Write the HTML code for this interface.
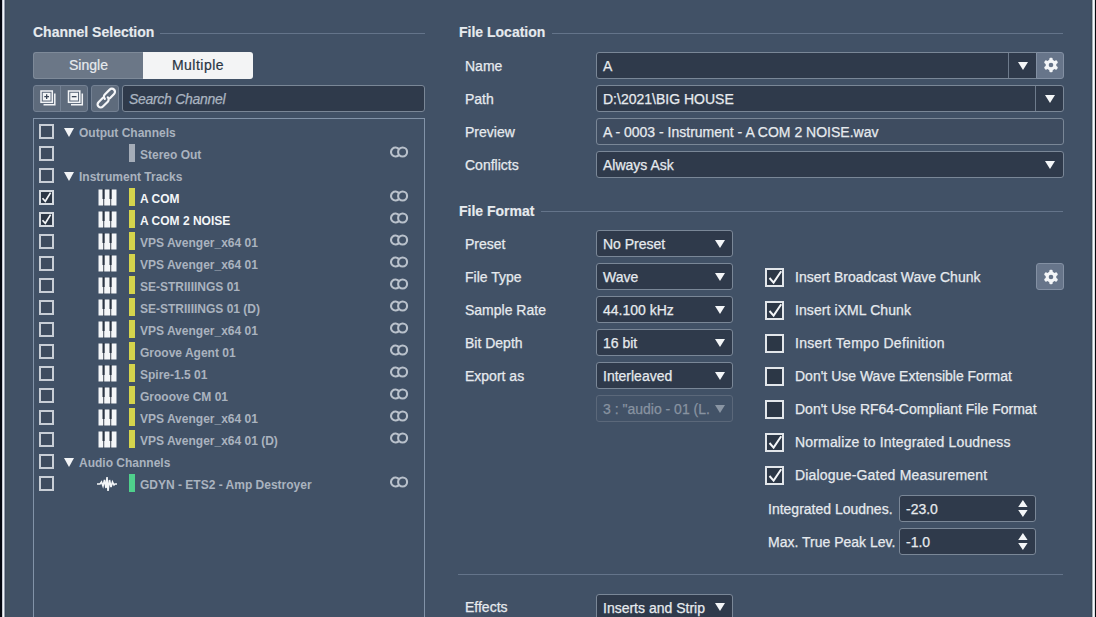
<!DOCTYPE html>
<html><head><meta charset="utf-8">
<style>
*{margin:0;padding:0;box-sizing:border-box}
html,body{width:1096px;height:617px;overflow:hidden;background:#415166;font-family:"Liberation Sans",sans-serif;color:#e6eaee}
.a{position:absolute}
#edgeL{left:0;top:0;width:2px;height:617px;background:#05080d}
#edgeL2{left:2px;top:0;width:1px;height:617px;background:#c9ced2}
#edgeL3{left:3px;top:0;width:1px;height:617px;background:#f3f7f9}
#edgeL4{left:4px;top:0;width:1px;height:617px;background:#96a0aa}
#edgeL5{left:5px;top:0;width:1px;height:617px;background:#3d4a5b}
#edgeL6{left:6px;top:0;width:4px;height:617px;background:#44535f}
#edgeR0{left:1091px;top:0;width:1px;height:617px;background:#3e4c58}
#edgeR{left:1092px;top:0;width:1px;height:617px;background:#a6b0b8}
#edgeR1{left:1093px;top:0;width:1px;height:617px;background:#f4f8fa}
#edgeR3{left:1094px;top:0;width:1px;height:617px;background:#d9dee2}
#edgeR2{left:1095px;top:0;width:1px;height:617px;background:#080b10}
.h{font-weight:bold;font-size:14px;line-height:17px;white-space:nowrap;-webkit-text-stroke:0.15px currentColor}
.sep{height:1px;background:#64748a}
.lbl{font-size:14px;line-height:16px;white-space:nowrap;-webkit-text-stroke:0.25px currentColor}
.inp{background:#2f3a4b;border:1px solid #7a8797;border-radius:3px;font-size:14px;line-height:26px;padding-left:6px;white-space:nowrap;overflow:hidden;-webkit-text-stroke:0.25px currentColor}
.tri{width:0;height:0;border-left:5px solid transparent;border-right:5px solid transparent;border-top:9px solid #f2f4f6}
.cb{width:15px;height:15px;border:2px solid #dfe3e8}
.tcb{width:15px;height:15px;border:2px solid #c9ced6}
.ti{font-size:12px;font-weight:bold;line-height:14px;color:#aab3bf;white-space:nowrap}
.bar{width:6px;height:18px;background:#d5d44c}
</style></head><body>
<div class="a" id="edgeL"></div><div class="a" id="edgeL2"></div><div class="a" id="edgeL3"></div><div class="a" id="edgeL4"></div><div class="a" id="edgeL5"></div><div class="a" id="edgeL6"></div>
<div class="a" id="edgeR0"></div><div class="a" id="edgeR"></div><div class="a" id="edgeR1"></div><div class="a" id="edgeR3"></div><div class="a" id="edgeR2"></div>

<!-- Left panel -->
<div class="a h" style="left:33px;top:24px">Channel Selection</div>
<div class="a sep" style="left:160px;top:33px;width:265px"></div>

<div class="a" style="left:33px;top:52px;width:110px;height:27px;background:#6b7787;border:1px solid #7e8a99;border-right:none;border-radius:3px 0 0 3px;font-size:14px;line-height:25px;text-align:center;color:#e6eaee;-webkit-text-stroke:0.2px currentColor">Single</div>
<div class="a" style="left:143px;top:52px;width:110px;height:27px;background:#f3f4f5;border-radius:0 3px 3px 0;font-size:14px;line-height:27px;text-align:center;color:#2a3443;letter-spacing:0.5px;-webkit-text-stroke:0.2px currentColor">Multiple</div>

<div class="a" style="left:33px;top:85px;width:55px;height:27px;background:#5e6b7c;border:1px solid #748193;border-radius:3px"></div>
<div class="a" style="left:60px;top:86px;width:1px;height:25px;background:#748193"></div>
<div class="a" style="left:91px;top:85px;width:28px;height:27px;background:#5e6b7c;border:1px solid #748193;border-radius:3px"></div>
<svg class="a" style="left:33px;top:85px" width="90" height="27" viewBox="33 85 90 27">
<g fill="none" stroke="#f2f4f6" stroke-width="1.5">
<path d="M43.5 104.8 H54.8 V93.5"/>
<rect x="41" y="91" width="11.3" height="11.3"/>
<path d="M71 104.8 H82.3 V93.5"/>
<rect x="68.5" y="91" width="11.3" height="11.3"/>
</g>
<rect x="42.8" y="92.8" width="7.7" height="7.7" fill="#f2f4f6"/>
<rect x="70.3" y="92.8" width="7.7" height="7.7" fill="#f2f4f6"/>
<path d="M46.65 94.3 V99 M44.3 96.65 H49" stroke="#3a4556" stroke-width="1.3"/>
<path d="M71.8 96.65 H76.5" stroke="#3a4556" stroke-width="1.3"/>
<g transform="rotate(-45 106 97.8)" fill="none" stroke="#f6f7f9" stroke-width="2.2" stroke-linecap="round">
<path d="M103.5 95.6 H97.6 A3.1 3.1 0 0 0 97.6 101.8 H104.5 A3.1 3.1 0 0 0 107.6 98.7"/>
<path d="M108.5 100.8 H114.4 A3.1 3.1 0 0 0 114.4 94.6 H107.5 A3.1 3.1 0 0 0 104.4 97.7"/>
</g>
</svg>
<div class="a inp" style="left:122px;top:85px;width:303px;height:27px;font-style:italic;color:#aab4c0;letter-spacing:-0.3px">Search Channel</div>

<div class="a" style="left:33px;top:118px;width:392px;height:510px;border:1px solid #8293a8"></div>

<div id="tree">
<svg class="a" style="left:39px;top:124px" width="15" height="15" viewBox="0 0 15 15"><rect x="1" y="1" width="13" height="13" fill="#3e4c5f" stroke="#c8ced6" stroke-width="2"/></svg>
<div class="a tri" style="left:64px;top:128px"></div>
<div class="a ti" style="left:79px;top:126px">Output Channels</div>
<svg class="a" style="left:39px;top:146px" width="15" height="15" viewBox="0 0 15 15"><rect x="1" y="1" width="13" height="13" fill="#3e4c5f" stroke="#c8ced6" stroke-width="2"/></svg>
<div class="a bar" style="left:129px;top:144px;background:#a5adb8"></div>
<div class="a ti" style="left:140px;top:148px;color:#aab3bf">Stereo Out</div>
<svg class="a" style="left:389px;top:146px" width="21" height="13" viewBox="0 0 21 13"><path d="M10.05 3.23 A4.5 4.5 0 1 0 10.05 8.77" fill="none" stroke="#b9c1cb" stroke-width="2.1"/><circle cx="13.6" cy="6" r="4.5" fill="none" stroke="#b9c1cb" stroke-width="2.1"/></svg>
<svg class="a" style="left:39px;top:168px" width="15" height="15" viewBox="0 0 15 15"><rect x="1" y="1" width="13" height="13" fill="#3e4c5f" stroke="#c8ced6" stroke-width="2"/></svg>
<div class="a tri" style="left:64px;top:172px"></div>
<div class="a ti" style="left:79px;top:170px">Instrument Tracks</div>
<svg class="a" style="left:39px;top:190px" width="15" height="15" viewBox="0 0 15 15"><rect x="1" y="1" width="13" height="13" fill="#2c3746" stroke="#d5dae0" stroke-width="2"/><path d="M3.5 8.2 L6.3 11.3 L11.6 2.6" fill="none" stroke="#f4f6f8" stroke-width="1.7"/></svg>
<svg class="a" style="left:98px;top:189px" width="19" height="17" viewBox="0 0 19 17"><rect x="0.5" y="0.5" width="18" height="16" fill="#f4f6f8"/><rect x="4.5" y="0" width="2.2" height="10" fill="#2a3442"/><rect x="11.5" y="0" width="2.2" height="10" fill="#2a3442"/><rect x="5.3" y="10" width="0.9" height="7" fill="#2a3442"/><rect x="12.3" y="10" width="0.9" height="7" fill="#2a3442"/></svg>
<div class="a bar" style="left:129px;top:188px"></div>
<div class="a ti" style="left:140px;top:192px;color:#f4f6f8">A COM</div>
<svg class="a" style="left:389px;top:190px" width="21" height="13" viewBox="0 0 21 13"><path d="M10.05 3.23 A4.5 4.5 0 1 0 10.05 8.77" fill="none" stroke="#b9c1cb" stroke-width="2.1"/><circle cx="13.6" cy="6" r="4.5" fill="none" stroke="#b9c1cb" stroke-width="2.1"/></svg>
<svg class="a" style="left:39px;top:212px" width="15" height="15" viewBox="0 0 15 15"><rect x="1" y="1" width="13" height="13" fill="#2c3746" stroke="#d5dae0" stroke-width="2"/><path d="M3.5 8.2 L6.3 11.3 L11.6 2.6" fill="none" stroke="#f4f6f8" stroke-width="1.7"/></svg>
<svg class="a" style="left:98px;top:211px" width="19" height="17" viewBox="0 0 19 17"><rect x="0.5" y="0.5" width="18" height="16" fill="#f4f6f8"/><rect x="4.5" y="0" width="2.2" height="10" fill="#2a3442"/><rect x="11.5" y="0" width="2.2" height="10" fill="#2a3442"/><rect x="5.3" y="10" width="0.9" height="7" fill="#2a3442"/><rect x="12.3" y="10" width="0.9" height="7" fill="#2a3442"/></svg>
<div class="a bar" style="left:129px;top:210px"></div>
<div class="a ti" style="left:140px;top:214px;color:#f4f6f8">A COM 2 NOISE</div>
<svg class="a" style="left:389px;top:212px" width="21" height="13" viewBox="0 0 21 13"><path d="M10.05 3.23 A4.5 4.5 0 1 0 10.05 8.77" fill="none" stroke="#b9c1cb" stroke-width="2.1"/><circle cx="13.6" cy="6" r="4.5" fill="none" stroke="#b9c1cb" stroke-width="2.1"/></svg>
<svg class="a" style="left:39px;top:234px" width="15" height="15" viewBox="0 0 15 15"><rect x="1" y="1" width="13" height="13" fill="#3e4c5f" stroke="#c8ced6" stroke-width="2"/></svg>
<svg class="a" style="left:98px;top:233px" width="19" height="17" viewBox="0 0 19 17"><rect x="0.5" y="0.5" width="18" height="16" fill="#f4f6f8"/><rect x="4.5" y="0" width="2.2" height="10" fill="#2a3442"/><rect x="11.5" y="0" width="2.2" height="10" fill="#2a3442"/><rect x="5.3" y="10" width="0.9" height="7" fill="#2a3442"/><rect x="12.3" y="10" width="0.9" height="7" fill="#2a3442"/></svg>
<div class="a bar" style="left:129px;top:232px"></div>
<div class="a ti" style="left:140px;top:236px;color:#aab3bf">VPS Avenger_x64 01</div>
<svg class="a" style="left:389px;top:234px" width="21" height="13" viewBox="0 0 21 13"><path d="M10.05 3.23 A4.5 4.5 0 1 0 10.05 8.77" fill="none" stroke="#b9c1cb" stroke-width="2.1"/><circle cx="13.6" cy="6" r="4.5" fill="none" stroke="#b9c1cb" stroke-width="2.1"/></svg>
<svg class="a" style="left:39px;top:256px" width="15" height="15" viewBox="0 0 15 15"><rect x="1" y="1" width="13" height="13" fill="#3e4c5f" stroke="#c8ced6" stroke-width="2"/></svg>
<svg class="a" style="left:98px;top:255px" width="19" height="17" viewBox="0 0 19 17"><rect x="0.5" y="0.5" width="18" height="16" fill="#f4f6f8"/><rect x="4.5" y="0" width="2.2" height="10" fill="#2a3442"/><rect x="11.5" y="0" width="2.2" height="10" fill="#2a3442"/><rect x="5.3" y="10" width="0.9" height="7" fill="#2a3442"/><rect x="12.3" y="10" width="0.9" height="7" fill="#2a3442"/></svg>
<div class="a bar" style="left:129px;top:254px"></div>
<div class="a ti" style="left:140px;top:258px;color:#aab3bf">VPS Avenger_x64 01</div>
<svg class="a" style="left:389px;top:256px" width="21" height="13" viewBox="0 0 21 13"><path d="M10.05 3.23 A4.5 4.5 0 1 0 10.05 8.77" fill="none" stroke="#b9c1cb" stroke-width="2.1"/><circle cx="13.6" cy="6" r="4.5" fill="none" stroke="#b9c1cb" stroke-width="2.1"/></svg>
<svg class="a" style="left:39px;top:278px" width="15" height="15" viewBox="0 0 15 15"><rect x="1" y="1" width="13" height="13" fill="#3e4c5f" stroke="#c8ced6" stroke-width="2"/></svg>
<svg class="a" style="left:98px;top:277px" width="19" height="17" viewBox="0 0 19 17"><rect x="0.5" y="0.5" width="18" height="16" fill="#f4f6f8"/><rect x="4.5" y="0" width="2.2" height="10" fill="#2a3442"/><rect x="11.5" y="0" width="2.2" height="10" fill="#2a3442"/><rect x="5.3" y="10" width="0.9" height="7" fill="#2a3442"/><rect x="12.3" y="10" width="0.9" height="7" fill="#2a3442"/></svg>
<div class="a bar" style="left:129px;top:276px"></div>
<div class="a ti" style="left:140px;top:280px;color:#aab3bf">SE-STRIIIINGS 01</div>
<svg class="a" style="left:389px;top:278px" width="21" height="13" viewBox="0 0 21 13"><path d="M10.05 3.23 A4.5 4.5 0 1 0 10.05 8.77" fill="none" stroke="#b9c1cb" stroke-width="2.1"/><circle cx="13.6" cy="6" r="4.5" fill="none" stroke="#b9c1cb" stroke-width="2.1"/></svg>
<svg class="a" style="left:39px;top:300px" width="15" height="15" viewBox="0 0 15 15"><rect x="1" y="1" width="13" height="13" fill="#3e4c5f" stroke="#c8ced6" stroke-width="2"/></svg>
<svg class="a" style="left:98px;top:299px" width="19" height="17" viewBox="0 0 19 17"><rect x="0.5" y="0.5" width="18" height="16" fill="#f4f6f8"/><rect x="4.5" y="0" width="2.2" height="10" fill="#2a3442"/><rect x="11.5" y="0" width="2.2" height="10" fill="#2a3442"/><rect x="5.3" y="10" width="0.9" height="7" fill="#2a3442"/><rect x="12.3" y="10" width="0.9" height="7" fill="#2a3442"/></svg>
<div class="a bar" style="left:129px;top:298px"></div>
<div class="a ti" style="left:140px;top:302px;color:#aab3bf">SE-STRIIIINGS 01 (D)</div>
<svg class="a" style="left:389px;top:300px" width="21" height="13" viewBox="0 0 21 13"><path d="M10.05 3.23 A4.5 4.5 0 1 0 10.05 8.77" fill="none" stroke="#b9c1cb" stroke-width="2.1"/><circle cx="13.6" cy="6" r="4.5" fill="none" stroke="#b9c1cb" stroke-width="2.1"/></svg>
<svg class="a" style="left:39px;top:322px" width="15" height="15" viewBox="0 0 15 15"><rect x="1" y="1" width="13" height="13" fill="#3e4c5f" stroke="#c8ced6" stroke-width="2"/></svg>
<svg class="a" style="left:98px;top:321px" width="19" height="17" viewBox="0 0 19 17"><rect x="0.5" y="0.5" width="18" height="16" fill="#f4f6f8"/><rect x="4.5" y="0" width="2.2" height="10" fill="#2a3442"/><rect x="11.5" y="0" width="2.2" height="10" fill="#2a3442"/><rect x="5.3" y="10" width="0.9" height="7" fill="#2a3442"/><rect x="12.3" y="10" width="0.9" height="7" fill="#2a3442"/></svg>
<div class="a bar" style="left:129px;top:320px"></div>
<div class="a ti" style="left:140px;top:324px;color:#aab3bf">VPS Avenger_x64 01</div>
<svg class="a" style="left:389px;top:322px" width="21" height="13" viewBox="0 0 21 13"><path d="M10.05 3.23 A4.5 4.5 0 1 0 10.05 8.77" fill="none" stroke="#b9c1cb" stroke-width="2.1"/><circle cx="13.6" cy="6" r="4.5" fill="none" stroke="#b9c1cb" stroke-width="2.1"/></svg>
<svg class="a" style="left:39px;top:344px" width="15" height="15" viewBox="0 0 15 15"><rect x="1" y="1" width="13" height="13" fill="#3e4c5f" stroke="#c8ced6" stroke-width="2"/></svg>
<svg class="a" style="left:98px;top:343px" width="19" height="17" viewBox="0 0 19 17"><rect x="0.5" y="0.5" width="18" height="16" fill="#f4f6f8"/><rect x="4.5" y="0" width="2.2" height="10" fill="#2a3442"/><rect x="11.5" y="0" width="2.2" height="10" fill="#2a3442"/><rect x="5.3" y="10" width="0.9" height="7" fill="#2a3442"/><rect x="12.3" y="10" width="0.9" height="7" fill="#2a3442"/></svg>
<div class="a bar" style="left:129px;top:342px"></div>
<div class="a ti" style="left:140px;top:346px;color:#aab3bf">Groove Agent 01</div>
<svg class="a" style="left:389px;top:344px" width="21" height="13" viewBox="0 0 21 13"><path d="M10.05 3.23 A4.5 4.5 0 1 0 10.05 8.77" fill="none" stroke="#b9c1cb" stroke-width="2.1"/><circle cx="13.6" cy="6" r="4.5" fill="none" stroke="#b9c1cb" stroke-width="2.1"/></svg>
<svg class="a" style="left:39px;top:366px" width="15" height="15" viewBox="0 0 15 15"><rect x="1" y="1" width="13" height="13" fill="#3e4c5f" stroke="#c8ced6" stroke-width="2"/></svg>
<svg class="a" style="left:98px;top:365px" width="19" height="17" viewBox="0 0 19 17"><rect x="0.5" y="0.5" width="18" height="16" fill="#f4f6f8"/><rect x="4.5" y="0" width="2.2" height="10" fill="#2a3442"/><rect x="11.5" y="0" width="2.2" height="10" fill="#2a3442"/><rect x="5.3" y="10" width="0.9" height="7" fill="#2a3442"/><rect x="12.3" y="10" width="0.9" height="7" fill="#2a3442"/></svg>
<div class="a bar" style="left:129px;top:364px"></div>
<div class="a ti" style="left:140px;top:368px;color:#aab3bf">Spire-1.5 01</div>
<svg class="a" style="left:389px;top:366px" width="21" height="13" viewBox="0 0 21 13"><path d="M10.05 3.23 A4.5 4.5 0 1 0 10.05 8.77" fill="none" stroke="#b9c1cb" stroke-width="2.1"/><circle cx="13.6" cy="6" r="4.5" fill="none" stroke="#b9c1cb" stroke-width="2.1"/></svg>
<svg class="a" style="left:39px;top:388px" width="15" height="15" viewBox="0 0 15 15"><rect x="1" y="1" width="13" height="13" fill="#3e4c5f" stroke="#c8ced6" stroke-width="2"/></svg>
<svg class="a" style="left:98px;top:387px" width="19" height="17" viewBox="0 0 19 17"><rect x="0.5" y="0.5" width="18" height="16" fill="#f4f6f8"/><rect x="4.5" y="0" width="2.2" height="10" fill="#2a3442"/><rect x="11.5" y="0" width="2.2" height="10" fill="#2a3442"/><rect x="5.3" y="10" width="0.9" height="7" fill="#2a3442"/><rect x="12.3" y="10" width="0.9" height="7" fill="#2a3442"/></svg>
<div class="a bar" style="left:129px;top:386px"></div>
<div class="a ti" style="left:140px;top:390px;color:#aab3bf">Grooove CM 01</div>
<svg class="a" style="left:389px;top:388px" width="21" height="13" viewBox="0 0 21 13"><path d="M10.05 3.23 A4.5 4.5 0 1 0 10.05 8.77" fill="none" stroke="#b9c1cb" stroke-width="2.1"/><circle cx="13.6" cy="6" r="4.5" fill="none" stroke="#b9c1cb" stroke-width="2.1"/></svg>
<svg class="a" style="left:39px;top:410px" width="15" height="15" viewBox="0 0 15 15"><rect x="1" y="1" width="13" height="13" fill="#3e4c5f" stroke="#c8ced6" stroke-width="2"/></svg>
<svg class="a" style="left:98px;top:409px" width="19" height="17" viewBox="0 0 19 17"><rect x="0.5" y="0.5" width="18" height="16" fill="#f4f6f8"/><rect x="4.5" y="0" width="2.2" height="10" fill="#2a3442"/><rect x="11.5" y="0" width="2.2" height="10" fill="#2a3442"/><rect x="5.3" y="10" width="0.9" height="7" fill="#2a3442"/><rect x="12.3" y="10" width="0.9" height="7" fill="#2a3442"/></svg>
<div class="a bar" style="left:129px;top:408px"></div>
<div class="a ti" style="left:140px;top:412px;color:#aab3bf">VPS Avenger_x64 01</div>
<svg class="a" style="left:389px;top:410px" width="21" height="13" viewBox="0 0 21 13"><path d="M10.05 3.23 A4.5 4.5 0 1 0 10.05 8.77" fill="none" stroke="#b9c1cb" stroke-width="2.1"/><circle cx="13.6" cy="6" r="4.5" fill="none" stroke="#b9c1cb" stroke-width="2.1"/></svg>
<svg class="a" style="left:39px;top:432px" width="15" height="15" viewBox="0 0 15 15"><rect x="1" y="1" width="13" height="13" fill="#3e4c5f" stroke="#c8ced6" stroke-width="2"/></svg>
<svg class="a" style="left:98px;top:431px" width="19" height="17" viewBox="0 0 19 17"><rect x="0.5" y="0.5" width="18" height="16" fill="#f4f6f8"/><rect x="4.5" y="0" width="2.2" height="10" fill="#2a3442"/><rect x="11.5" y="0" width="2.2" height="10" fill="#2a3442"/><rect x="5.3" y="10" width="0.9" height="7" fill="#2a3442"/><rect x="12.3" y="10" width="0.9" height="7" fill="#2a3442"/></svg>
<div class="a bar" style="left:129px;top:430px"></div>
<div class="a ti" style="left:140px;top:434px;color:#aab3bf">VPS Avenger_x64 01 (D)</div>
<svg class="a" style="left:389px;top:432px" width="21" height="13" viewBox="0 0 21 13"><path d="M10.05 3.23 A4.5 4.5 0 1 0 10.05 8.77" fill="none" stroke="#b9c1cb" stroke-width="2.1"/><circle cx="13.6" cy="6" r="4.5" fill="none" stroke="#b9c1cb" stroke-width="2.1"/></svg>
<svg class="a" style="left:39px;top:454px" width="15" height="15" viewBox="0 0 15 15"><rect x="1" y="1" width="13" height="13" fill="#3e4c5f" stroke="#c8ced6" stroke-width="2"/></svg>
<div class="a tri" style="left:64px;top:458px"></div>
<div class="a ti" style="left:79px;top:456px">Audio Channels</div>
<svg class="a" style="left:39px;top:476px" width="15" height="15" viewBox="0 0 15 15"><rect x="1" y="1" width="13" height="13" fill="#3e4c5f" stroke="#c8ced6" stroke-width="2"/></svg>
<svg class="a" style="left:96px;top:476px" width="22" height="16" viewBox="0 0 22 16"><path d="M1 8 L4 8 L5.5 6 L7 10 L8.5 4 L10 12 L11 1 L12 15 L13.5 4 L15 11 L16.5 6 L18 9 L19 8 L21 8" fill="none" stroke="#f4f6f8" stroke-width="1.6" stroke-linejoin="miter"/></svg>
<div class="a bar" style="left:129px;top:474px;background:#4fd08c"></div>
<div class="a ti" style="left:140px;top:478px;color:#aab3bf">GDYN - ETS2 - Amp Destroyer</div>
<svg class="a" style="left:389px;top:476px" width="21" height="13" viewBox="0 0 21 13"><path d="M10.05 3.23 A4.5 4.5 0 1 0 10.05 8.77" fill="none" stroke="#b9c1cb" stroke-width="2.1"/><circle cx="13.6" cy="6" r="4.5" fill="none" stroke="#b9c1cb" stroke-width="2.1"/></svg>
</div><!--/tree-->

<!-- Right panel -->
<div class="a h" style="left:459px;top:24px">File Location</div>
<div class="a sep" style="left:552px;top:33px;width:511px"></div>

<div class="a lbl" style="left:465px;top:58px">Name</div>
<div class="a lbl" style="left:465px;top:91px">Path</div>
<div class="a lbl" style="left:465px;top:124px">Preview</div>
<div class="a lbl" style="left:465px;top:157px">Conflicts</div>

<div class="a inp" style="left:596px;top:52px;width:441px;height:27px;border-radius:3px 0 0 3px">A</div>
<div class="a" style="left:1008px;top:53px;width:1px;height:25px;background:#6e7b8c"></div>
<div class="a" style="left:1036px;top:52px;width:28px;height:27px;background:#67758a;border:1px solid #8390a3;border-radius:0 3px 3px 0"></div>

<div class="a inp" style="left:596px;top:85px;width:468px;height:27px">D:\2021\BIG HOUSE</div>
<div class="a" style="left:1035px;top:86px;width:1px;height:25px;background:#6e7b8c"></div>
<div class="a inp" style="left:596px;top:118px;width:468px;height:27px;background:#3e4c60">A - 0003 - Instrument - A COM 2 NOISE.wav</div>
<div class="a inp" style="left:596px;top:151px;width:468px;height:27px">Always Ask</div>

<div class="a h" style="left:459px;top:203px">File Format</div>
<div class="a sep" style="left:541px;top:211px;width:522px"></div>

<div class="a lbl" style="left:465px;top:236px">Preset</div>
<div class="a lbl" style="left:465px;top:269px">File Type</div>
<div class="a lbl" style="left:465px;top:302px">Sample Rate</div>
<div class="a lbl" style="left:465px;top:335px">Bit Depth</div>
<div class="a lbl" style="left:465px;top:368px">Export as</div>

<div class="a inp" style="left:596px;top:230px;width:137px;height:27px">No Preset</div>
<div class="a inp" style="left:596px;top:263px;width:137px;height:27px">Wave</div>
<div class="a inp" style="left:596px;top:296px;width:137px;height:27px">44.100 kHz</div>
<div class="a inp" style="left:596px;top:329px;width:137px;height:27px">16 bit</div>
<div class="a inp" style="left:596px;top:362px;width:137px;height:27px">Interleaved</div>
<div class="a inp" style="left:596px;top:395px;width:137px;height:27px;background:#425267;color:#8893a1;border-color:#5b687a">3 : "audio - 01 (L.</div>

<div id="right">
<svg class="a" style="left:765px;top:268px" width="19" height="19" viewBox="0 0 19 19"><rect x="1" y="1" width="17" height="17" fill="#2c3746" stroke="#e2e6ea" stroke-width="2"/><path d="M4.5 10 L8.6 14.6 L16.2 3.2" fill="none" stroke="#f4f6f8" stroke-width="2"/></svg>
<div class="a lbl" style="left:795px;top:269px;letter-spacing:0px">Insert Broadcast Wave Chunk</div>
<svg class="a" style="left:765px;top:301px" width="19" height="19" viewBox="0 0 19 19"><rect x="1" y="1" width="17" height="17" fill="#2c3746" stroke="#e2e6ea" stroke-width="2"/><path d="M4.5 10 L8.6 14.6 L16.2 3.2" fill="none" stroke="#f4f6f8" stroke-width="2"/></svg>
<div class="a lbl" style="left:795px;top:302px;letter-spacing:0.08px">Insert iXML Chunk</div>
<svg class="a" style="left:765px;top:334px" width="19" height="19" viewBox="0 0 19 19"><rect x="1" y="1" width="17" height="17" fill="#2c3746" stroke="#e2e6ea" stroke-width="2"/></svg>
<div class="a lbl" style="left:795px;top:335px;letter-spacing:0.3px">Insert Tempo Definition</div>
<svg class="a" style="left:765px;top:367px" width="19" height="19" viewBox="0 0 19 19"><rect x="1" y="1" width="17" height="17" fill="#2c3746" stroke="#e2e6ea" stroke-width="2"/></svg>
<div class="a lbl" style="left:795px;top:368px;letter-spacing:0px">Don&#39;t Use Wave Extensible Format</div>
<svg class="a" style="left:765px;top:400px" width="19" height="19" viewBox="0 0 19 19"><rect x="1" y="1" width="17" height="17" fill="#2c3746" stroke="#e2e6ea" stroke-width="2"/></svg>
<div class="a lbl" style="left:795px;top:401px;letter-spacing:0px">Don&#39;t Use RF64-Compliant File Format</div>
<svg class="a" style="left:765px;top:433px" width="19" height="19" viewBox="0 0 19 19"><rect x="1" y="1" width="17" height="17" fill="#2c3746" stroke="#e2e6ea" stroke-width="2"/><path d="M4.5 10 L8.6 14.6 L16.2 3.2" fill="none" stroke="#f4f6f8" stroke-width="2"/></svg>
<div class="a lbl" style="left:795px;top:434px;letter-spacing:0.17px">Normalize to Integrated Loudness</div>
<svg class="a" style="left:765px;top:466px" width="19" height="19" viewBox="0 0 19 19"><rect x="1" y="1" width="17" height="17" fill="#2c3746" stroke="#e2e6ea" stroke-width="2"/><path d="M4.5 10 L8.6 14.6 L16.2 3.2" fill="none" stroke="#f4f6f8" stroke-width="2"/></svg>
<div class="a lbl" style="left:795px;top:467px;letter-spacing:0.18px">Dialogue-Gated Measurement</div>
<svg class="a" style="left:714.5px;top:240px" width="10" height="8" viewBox="0 0 10 8"><path d="M0 0 L10 0 L5.0 8 Z" fill="#f4f6f8"/></svg>
<svg class="a" style="left:714.5px;top:273px" width="10" height="8" viewBox="0 0 10 8"><path d="M0 0 L10 0 L5.0 8 Z" fill="#f4f6f8"/></svg>
<svg class="a" style="left:714.5px;top:306px" width="10" height="8" viewBox="0 0 10 8"><path d="M0 0 L10 0 L5.0 8 Z" fill="#f4f6f8"/></svg>
<svg class="a" style="left:714.5px;top:339px" width="10" height="8" viewBox="0 0 10 8"><path d="M0 0 L10 0 L5.0 8 Z" fill="#f4f6f8"/></svg>
<svg class="a" style="left:714.5px;top:372px" width="10" height="8" viewBox="0 0 10 8"><path d="M0 0 L10 0 L5.0 8 Z" fill="#f4f6f8"/></svg>
<svg class="a" style="left:714.5px;top:405px" width="10" height="8" viewBox="0 0 10 8"><path d="M0 0 L10 0 L5.0 8 Z" fill="#8a95a3"/></svg>
<svg class="a" style="left:714.5px;top:603px" width="10" height="8" viewBox="0 0 10 8"><path d="M0 0 L10 0 L5.0 8 Z" fill="#f4f6f8"/></svg>
<svg class="a" style="left:1018px;top:62px" width="10" height="8" viewBox="0 0 10 8"><path d="M0 0 L10 0 L5.0 8 Z" fill="#f4f6f8"/></svg>
<svg class="a" style="left:1045px;top:95px" width="10" height="8" viewBox="0 0 10 8"><path d="M0 0 L10 0 L5.0 8 Z" fill="#f4f6f8"/></svg>
<svg class="a" style="left:1045px;top:161px" width="10" height="8" viewBox="0 0 10 8"><path d="M0 0 L10 0 L5.0 8 Z" fill="#f4f6f8"/></svg>
<svg class="a" style="left:1043px;top:57px" width="16" height="16" viewBox="-8 -8 16 16"><g fill="#f4f6f8"><rect x="-1.7" y="-7.3" width="3.4" height="4.5" rx="1.2" transform="rotate(0)"/><rect x="-1.7" y="-7.3" width="3.4" height="4.5" rx="1.2" transform="rotate(60)"/><rect x="-1.7" y="-7.3" width="3.4" height="4.5" rx="1.2" transform="rotate(120)"/><rect x="-1.7" y="-7.3" width="3.4" height="4.5" rx="1.2" transform="rotate(180)"/><rect x="-1.7" y="-7.3" width="3.4" height="4.5" rx="1.2" transform="rotate(240)"/><rect x="-1.7" y="-7.3" width="3.4" height="4.5" rx="1.2" transform="rotate(300)"/><circle r="5.4"/></g><circle r="2.3" fill="#67758a"/></svg>
<div class="a" style="left:1036px;top:263px;width:28px;height:27px;background:#67758a;border:1px solid #8390a3;border-radius:3px"></div>
<svg class="a" style="left:1043px;top:268.5px" width="16" height="16" viewBox="-8 -8 16 16"><g fill="#f4f6f8"><rect x="-1.7" y="-7.3" width="3.4" height="4.5" rx="1.2" transform="rotate(0)"/><rect x="-1.7" y="-7.3" width="3.4" height="4.5" rx="1.2" transform="rotate(60)"/><rect x="-1.7" y="-7.3" width="3.4" height="4.5" rx="1.2" transform="rotate(120)"/><rect x="-1.7" y="-7.3" width="3.4" height="4.5" rx="1.2" transform="rotate(180)"/><rect x="-1.7" y="-7.3" width="3.4" height="4.5" rx="1.2" transform="rotate(240)"/><rect x="-1.7" y="-7.3" width="3.4" height="4.5" rx="1.2" transform="rotate(300)"/><circle r="5.4"/></g><circle r="2.3" fill="#67758a"/></svg>
<div class="a lbl" style="left:768px;top:501px">Integrated Loudnes.</div>
<div class="a lbl" style="left:768px;top:534px">Max. True Peak Lev.</div>
<div class="a inp" style="left:899px;top:495px;width:137px;height:27px">-23.0</div>
<div class="a inp" style="left:899px;top:528px;width:137px;height:27px">-1.0</div>
<svg class="a" style="left:1018px;top:500px" width="10" height="17" viewBox="0 0 10 17"><path d="M0.2 7 L9.6 7 L4.9 0 Z M0.2 10 L9.6 10 L4.9 17 Z" fill="#f4f6f8"/></svg>
<svg class="a" style="left:1018px;top:533px" width="10" height="17" viewBox="0 0 10 17"><path d="M0.2 7 L9.6 7 L4.9 0 Z M0.2 10 L9.6 10 L4.9 17 Z" fill="#f4f6f8"/></svg>
</div><!--/right-->

<div class="a sep" style="left:458px;top:574px;width:605px"></div>
<div class="a lbl" style="left:465px;top:599px">Effects</div>
<div class="a inp" style="left:596px;top:594px;width:137px;height:27px">Inserts and Strip</div>
<svg class="a" style="left:714.5px;top:603px" width="10" height="8" viewBox="0 0 10 8"><path d="M0 0 L10 0 L5.0 8 Z" fill="#f4f6f8"/></svg>

</body></html>
